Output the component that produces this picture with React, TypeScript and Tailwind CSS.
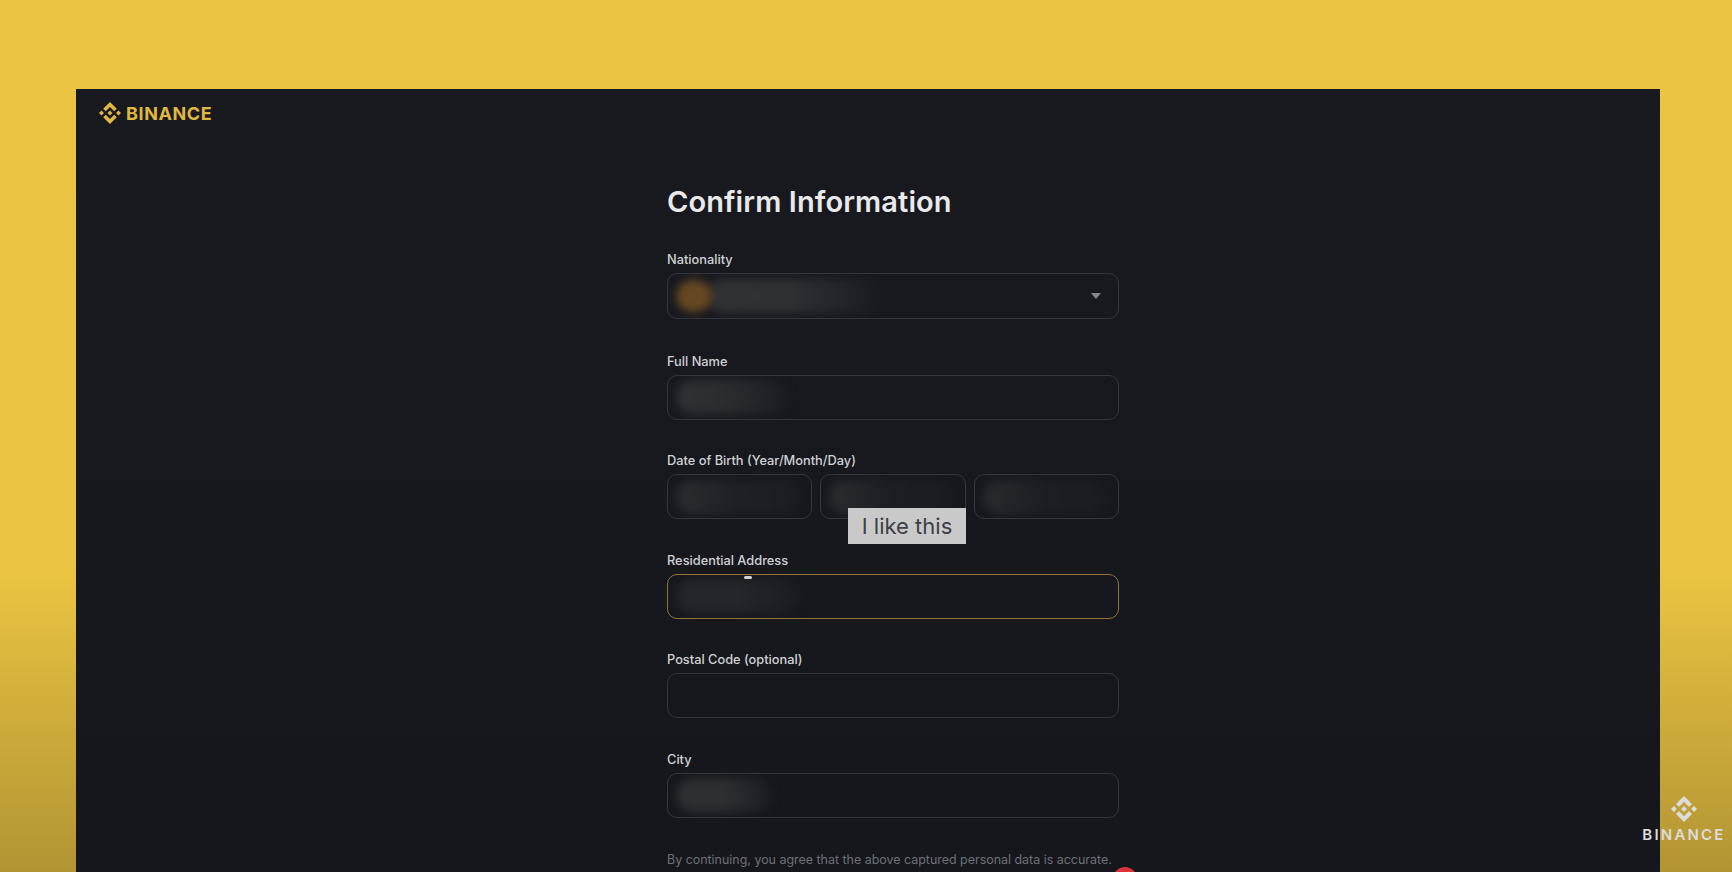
const LOGO_PATH =
  "M16.624 13.9202l2.7175 2.7154-7.353 7.353-7.353-7.352 2.7175-2.7164 4.6355 4.6595 4.6356-4.6595zm4.6366-4.6366L24 12l-2.7154 2.7164L18.5682 12l2.6924-2.7164zm-9.272.001l2.7163 2.6914-2.7164 2.7174v-.001L9.2721 12l2.7164-2.7154zm-9.2722-.001L5.4088 12l-2.6914 2.6924L0 12l2.7164-2.7164zM11.9885.0115l7.353 7.329-2.7174 2.7154-4.6356-4.6356-4.6355 4.6595-2.7174-2.7154 7.353-7.353z"

function BinanceMark({ className }: { className: string }) {
  return (
    <svg viewBox="0 0 24 24" fill="currentColor" className={className}>
      <path d={LOGO_PATH} />
    </svg>
  )
}

function Smudge({ className }: { className: string }) {
  return <div className={`h-[34px] rounded-full blur-[5px] ${className}`} />
}

function Field({ label, children }: { label: string; children: React.ReactNode }) {
  return (
    <div className="flex flex-col gap-[4px]">
      <div className="h-[18px] text-[12.8px] leading-[18px] font-medium text-[#d0d1d3]">{label}</div>
      {children}
    </div>
  )
}

function InputBox({ smudge, focused }: { smudge?: string; focused?: boolean }) {
  return (
    <div
      className={`flex h-[45px] items-center overflow-hidden rounded-[10px] border-[1.5px] px-[8px] ${
        focused ? "border-[#8f7337]" : "border-[#33363c]"
      }`}
    >
      {smudge && <Smudge className={smudge} />}
    </div>
  )
}

export default function App() {
  return (
    <div className="relative h-[872px] w-[1732px] overflow-hidden bg-gradient-to-b from-[#ebc542] from-[65%] to-[#b39433] px-[76px] pt-[89px] font-['Inter',sans-serif]">
      <div className="h-[783px] w-[1584px] overflow-hidden bg-gradient-to-b from-[#181a20] to-[#15171c]">
        {/* Header */}
        <div className="flex h-[48px] items-center gap-[5px] pl-[23px] text-[#e0b73f]">
          <BinanceMark className="h-[22px] w-[22px]" />
          <span className="text-[18px] font-bold tracking-[0.6px]">BINANCE</span>
        </div>

        {/* Form */}
        <div className="ml-[591px] w-[452px] pt-[47px]">
          <h1 className="mb-[31px] h-[36px] text-[29px] leading-[36px] font-semibold tracking-[0.1px] whitespace-nowrap text-[#e9e9ea]">
            Confirm Information
          </h1>

          <div className="flex flex-col gap-[32.4px]">
            <div className="mb-[1.6px]">
              <Field label="Nationality">
                <div className="flex h-[46px] items-center overflow-hidden rounded-[10px] border-[1.5px] border-[#33363c] px-[8px]">
                  <Smudge className="-mr-[34px] w-[170px] shrink-0 bg-gradient-to-r from-[#303135] via-[#2f3034] to-[#1b1d23]" />
                  <div className="-order-1 -mr-[6px] z-10 h-[32px] w-[36px] shrink-0 rounded-full bg-[#664722] blur-[4px]" />
                  <div className="mr-[9px] ml-auto h-0 w-0 border-x-[5px] border-t-[6px] border-x-transparent border-t-[#86888c]" />
                </div>
              </Field>
            </div>

            <Field label="Full Name">
              <InputBox smudge="w-[112px] bg-gradient-to-r from-[#303135] via-[#2b2c30] to-[#1b1d23]" />
            </Field>

            <Field label="Date of Birth (Year/Month/Day)">
              <div className="grid grid-cols-3 gap-[8px]">
                <InputBox smudge="w-[125px] bg-gradient-to-r from-[#2c2d31] via-[#1f2025] to-[#1c1d22]" />
                <InputBox smudge="w-[125px] bg-gradient-to-r from-[#2c2d31] via-[#1c1e23] to-[#1a1c21]" />
                <InputBox smudge="w-[125px] bg-gradient-to-r from-[#2a2b2f] via-[#1c1e23] to-[#1a1c21]" />
              </div>
            </Field>

            <Field label="Residential Address">
              <InputBox focused smudge="w-[125px] bg-gradient-to-r from-[#25262b] via-[#25262b] to-[#1a1c21]" />
            </Field>

            <Field label="Postal Code (optional)">
              <InputBox />
            </Field>

            <Field label="City">
              <InputBox smudge="w-[96px] bg-gradient-to-r from-[#2e2f33] via-[#2e2f33] to-[#1b1d23]" />
            </Field>
          </div>

          <p className="mt-[33px] text-[12.45px] leading-[18px] whitespace-nowrap text-[#6e7178]">
            By continuing, you agree that the above captured personal data is accurate.
          </p>
        </div>
      </div>

      {/* Overlays */}
      <div className="absolute top-[508px] left-[848px] flex h-[36px] w-[118px] items-center justify-center bg-[#c9c9c9] text-[22px] text-[#3c3f47]">
        I like this
      </div>
      <div className="absolute top-[576px] left-[744px] h-[3px] w-[8px] rounded-full bg-[#d5d5d5]" />
      <div className="absolute top-[867px] left-[1113px] h-[24px] w-[24px] rounded-full bg-[#e0323c]" />
      <div className="absolute top-[796px] left-[1640px] flex w-[88px] flex-col items-center gap-[5px] text-[#dcdcdc]">
        <BinanceMark className="h-[26px] w-[26px]" />
        <span className="text-[15px] leading-[15px] font-semibold tracking-[2.2px]">BINANCE</span>
      </div>
    </div>
  )
}
